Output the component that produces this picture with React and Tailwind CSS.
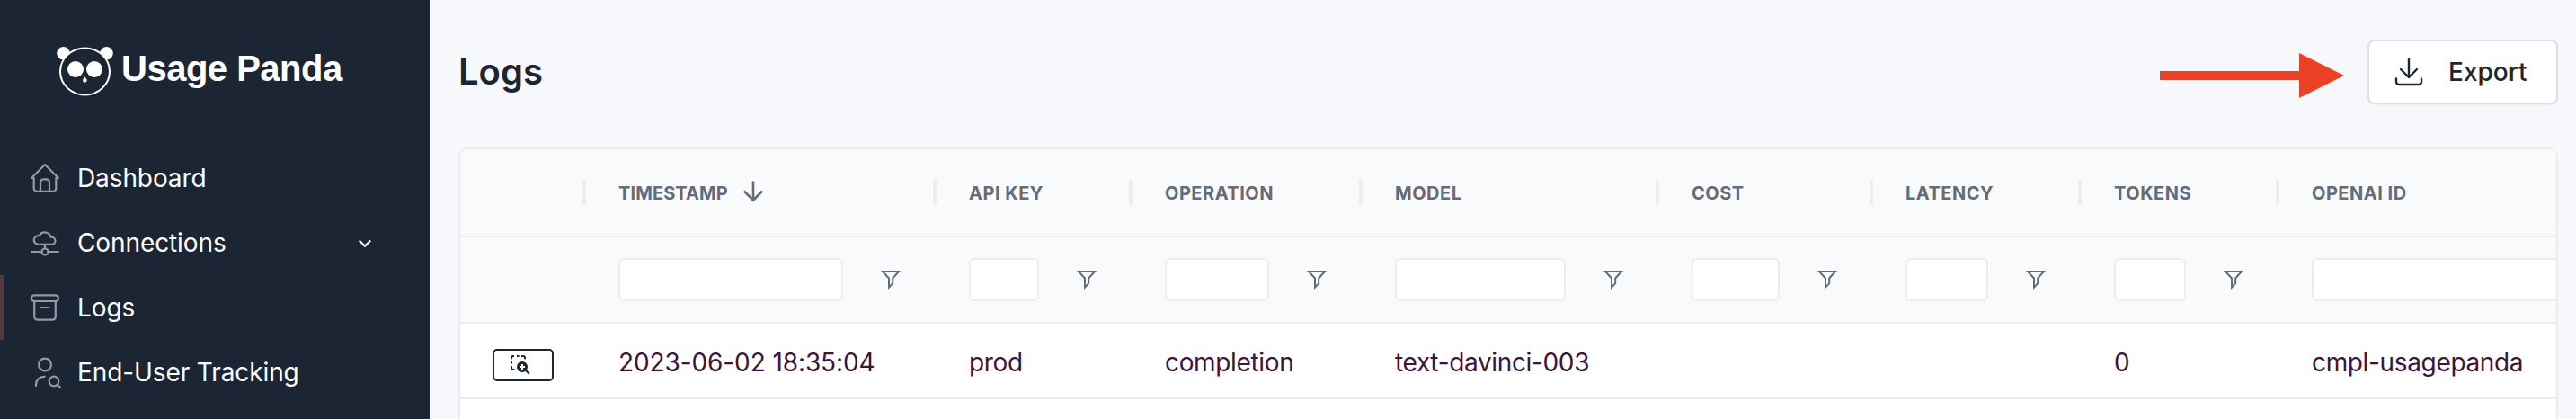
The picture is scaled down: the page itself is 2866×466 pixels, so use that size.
const columns = [
  { label: "", value: "", width: "w-[138px]" },
  {
    label: "TIMESTAMP",
    value: "2023-06-02 18:35:04",
    width: "w-[390px]",
    sorted: true,
    labelTracking: "tracking-[0.1px]",
    tracking: "tracking-[-0.1px]",
  },
  { label: "API KEY", value: "prod", width: "w-[218px]" },
  { label: "OPERATION", value: "completion", width: "w-[256px]" },
  { label: "MODEL", value: "text-davinci-003", width: "w-[330px]" },
  { label: "COST", value: "", width: "w-[238px]" },
  { label: "LATENCY", value: "", width: "w-[232px]" },
  { label: "TOKENS", value: "0", width: "w-[220px]" },
  { label: "OPENAI ID", value: "cmpl-usagepanda", width: "w-[480px]" },
];

function NavIcon({ children }) {
  return (
    <svg
      className="h-9 w-9 shrink-0 text-[#8f9aab]"
      viewBox="0 0 36 36"
      fill="none"
      stroke="currentColor"
      strokeWidth="2.200"
      strokeLinecap="round"
      strokeLinejoin="round"
    >
      {children}
    </svg>
  );
}

const HomeIcon = () => (
  <NavIcon>
    <path d="M3 18 18 3l15 15h-2.700M3 18h2.700v11.500a3.300 3.300 0 0 0 3.300 3.300h18a3.300 3.300 0 0 0 3.300-3.300V18" />
    <path d="M13 32.500V23a3.700 3.700 0 0 1 3.700-3.700h2.600A3.700 3.700 0 0 1 23 23v9.500" />
  </NavIcon>
);

const CloudIcon = () => (
  <NavIcon>
    <path d="M10.500 19.800a4.800 4.800 0 0 1 .2-9.700h1.200a6.800 6.800 0 0 1 12.700 1.700 4.050 4.050 0 0 1 1.500 8z" />
    <path d="M18 20v4.300M3 28h11.300M21.700 28H33" />
    <circle cx="18" cy="28" r="3.500" />
  </NavIcon>
);

const ArchiveIcon = () => (
  <NavIcon>
    <rect x="3" y="4.300" width="30" height="6.700" rx="3.200" />
    <path d="M6.200 11v17.300a3.300 3.300 0 0 0 3.300 3.300h17a3.300 3.300 0 0 0 3.300-3.300V11M14 18h8" />
  </NavIcon>
);

const UserSearchIcon = () => (
  <NavIcon>
    <circle cx="18" cy="9.500" r="6.900" />
    <path d="M8 33v-1.500a9 9 0 0 1 9-8.700h.6M32 31.800l3 3" />
    <circle cx="28" cy="28" r="5.300" />
  </NavIcon>
);

function NavItem({ icon, label, active, expandable }) {
  return (
    <li className="flex h-[72px]">
      <span className={active ? "w-1 bg-[#523b3d]" : "w-1"} />
      <div className="flex flex-1 items-center pr-[64px] pl-7">
        {icon}
        <span className="ml-[18px] flex-1 text-[28px] leading-9 tracking-[-0.1px] text-white">{label}</span>
        {expandable && (
          <svg className="h-4 w-4 text-white" viewBox="0 0 16 16" fill="none" stroke="currentColor" strokeWidth="2.200">
            <path d="m1.700 5.500 6.300 6.300 6.300-6.300" />
          </svg>
        )}
      </div>
    </li>
  );
}

function Sidebar() {
  return (
    <aside className="flex h-full w-[478px] shrink-0 flex-col bg-[#1c2533]">
      <div className="flex h-[162px] items-start pt-[50px] pl-[62px]">
        <svg className="h-[58px] w-[65px]" viewBox="0 0 65 58" fill="white">
          <circle cx="8.500" cy="9.300" r="7.300" />
          <circle cx="56.500" cy="9.300" r="7.300" />
          <ellipse cx="32.500" cy="29.500" rx="27.500" ry="26" fill="#1c2533" stroke="white" strokeWidth="2" />
          <circle cx="22" cy="27" r="9" />
          <circle cx="43" cy="27" r="9" />
          <path d="M32 35q1.500 2 2.400 3.200a2.300 2.300 0 1 1-4 0q1.200-1.200 1.600-3.200" />
        </svg>
        <span className="mt-0.5 ml-2 font-['Liberation_Sans'] text-[40px] leading-[48px] font-bold tracking-[-0.5px] text-white">
          Usage Panda
        </span>
      </div>
      <ul>
        <NavItem icon={<HomeIcon />} label="Dashboard" />
        <NavItem icon={<CloudIcon />} label="Connections" expandable />
        <NavItem icon={<ArchiveIcon />} label="Logs" active />
        <NavItem icon={<UserSearchIcon />} label="End-User Tracking" />
      </ul>
    </aside>
  );
}

function HeaderCell({ column, last }) {
  return (
    <div className={`flex shrink-0 items-center justify-between ${column.width}`}>
      <div className="flex items-center pt-0.5 pl-[38px]">
        <span
          className={`text-[20px] leading-7 font-bold text-[#646b7a] ${column.labelTracking ?? "tracking-[0.5px]"}`}
        >
          {column.label}
        </span>
        {column.sorted && (
          <svg
            className="-mt-1 ml-4 h-6 w-6 text-[#646b7a]"
            viewBox="0 0 24 24"
            fill="none"
            stroke="currentColor"
            strokeWidth="2.600"
          >
            <path d="M12 .5v21M1.800 11.500 12 21.700l10.200-10.200" />
          </svg>
        )}
      </div>
      {!last && <span className="-mr-0.5 h-7 w-1 bg-[#ededf0]" />}
    </div>
  );
}

function FilterCell({ column }) {
  return (
    <div className={`flex shrink-0 items-center px-[38px] ${column.width}`}>
      {column.label && (
        <>
          <div className="h-12 flex-1 rounded-[6px] border-2 border-[#ededf1] bg-white" />
          <svg
            className="ml-[42px] h-[22px] w-[22px] text-[#646b7a]"
            viewBox="0 0 22 22"
            fill="none"
            stroke="currentColor"
            strokeWidth="2"
          >
            <path d="M2 2h18l-6.800 7.500v5.700L9 19.600V9.500z" />
          </svg>
        </>
      )}
    </div>
  );
}

function InspectButton() {
  return (
    <button className="ml-[36px] flex h-9 w-[68px] items-center justify-center rounded-[5px] border-2 border-[#1c2533] bg-white pr-[6px] text-[#1c2533]">
      <svg className="h-[22px] w-[22px]" viewBox="0 0 22 22" fill="none" stroke="currentColor" strokeWidth="2">
        <path d="M1 4.200V3a2 2 0 0 1 2-2h1M7 1h2.500M12 1H14a2 2 0 0 1 2 2v1.200M1 7v2.500M1 12v2a2 2 0 0 0 2 2h1.500" />
        <circle cx="13" cy="13" r="6" fill="currentColor" stroke="none" />
        <path d="m16.500 16.500 4.500 4.500" />
        <path d="M13 10v6M10 13h6" stroke="white" />
      </svg>
    </button>
  );
}

function LogsTable() {
  return (
    <section className="mt-12 h-[340px] w-[2336px] overflow-hidden rounded-t-[10px] border-2 border-b-0 border-[#ededf1] bg-white">
      <div className="flex h-[98px] w-max border-b-2 border-[#ededf1] bg-[#f9fafc]">
        {columns.map((c, i) => (
          <HeaderCell key={c.label} column={c} last={i === columns.length - 1} />
        ))}
      </div>
      <div className="flex h-24 w-max border-b-2 border-[#ededf1] bg-[#f9fafc]">
        {columns.map((c) => (
          <FilterCell key={c.label} column={c} />
        ))}
      </div>
      <div className="flex h-[84px] w-max border-b-2 border-[#ededf1]">
        {columns.map((c) =>
          c.label ? (
            <div
              key={c.label}
              className={`flex shrink-0 items-center pt-[3px] pl-[38px] text-[28px] leading-9 text-[#3b153b] ${c.width} ${c.tracking ?? "tracking-[-0.35px]"}`}
            >
              {c.value}
            </div>
          ) : (
            <div key="inspect" className={`flex shrink-0 items-center pt-[10px] ${c.width}`}>
              <InspectButton />
            </div>
          )
        )}
      </div>
    </section>
  );
}

export default function App() {
  return (
    <div className="flex h-[466px] w-[2866px] overflow-hidden bg-[#f7f8fc] font-['Inter',sans-serif]">
      <Sidebar />
      <main className="flex flex-col pt-11 pl-8">
        <header className="flex h-[72px] w-[2336px] items-center">
          <h1 className="flex-1 text-[40px] leading-[48px] font-semibold text-[#1c2533]">Logs</h1>
          <svg className="mt-2 mr-[26px] h-[50px] w-[205px]" viewBox="0 0 205 50" fill="#ec4126">
            <path d="M0 20h155V0l50 25-50 25V30H0z" />
          </svg>
          <button className="flex h-[72px] w-[212px] items-center rounded-[8px] border-2 border-[#dcdfe4] bg-white pl-[28px] text-[#1c2533] shadow-xs">
            <svg
              className="h-8 w-8"
              viewBox="0 0 32 32"
              fill="none"
              stroke="currentColor"
              strokeWidth="2.400"
              strokeLinecap="round"
              strokeLinejoin="round"
            >
              <path d="M16 1.500V22M7 13l9 9 9-9M2 23.500v3.200A3.300 3.300 0 0 0 5.300 30h21.400a3.300 3.300 0 0 0 3.300-3.300v-3.200" />
            </svg>
            <span className="ml-7 text-[28px] leading-9 font-medium">Export</span>
          </button>
        </header>
        <LogsTable />
      </main>
    </div>
  );
}
